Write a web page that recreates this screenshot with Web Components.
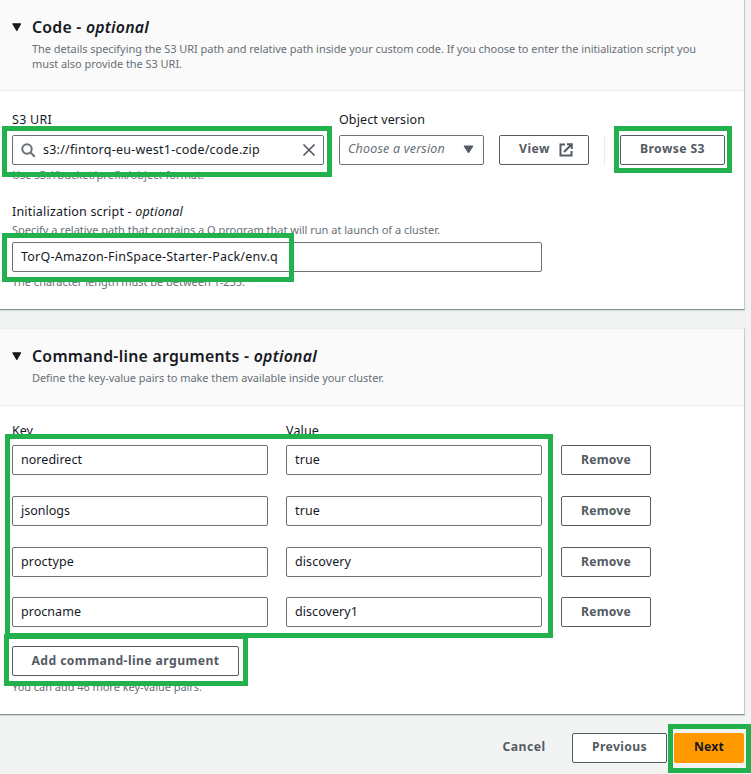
<!DOCTYPE html>
<html lang="en">
<head>
<meta charset="utf-8">
<title>Create cluster</title>
<style>
html, body { margin: 0; height: 774px; overflow: hidden; background: #f2f3f3; }
body { font: 13px/20px "Noto Sans", "Open Sans", sans-serif; color: #16191f; position: relative; }
</style>
</head>
<body>
<cluster-page></cluster-page>
<script>
// Single-line text whose tracking is tuned so that it spans the given width.
class FitText extends HTMLElement {
  connectedCallback() {
    if (this.shadowRoot) return;
    this.attachShadow({ mode: 'open' }).innerHTML =
      '<style>:host{display:block;white-space:nowrap}span{display:inline-block}</style><span><slot></slot></span>';
    requestAnimationFrame(() => this.fit());
    this.fit();
  }
  fit() {
    const want = parseFloat(this.getAttribute('w'));
    const span = this.shadowRoot.querySelector('span');
    const count = this.textContent.length;
    if (!want || !count) return;
    span.style.letterSpacing = '0px';
    const have = span.getBoundingClientRect().width;
    if (have) span.style.letterSpacing = ((want - have) / count).toFixed(4) + 'px';
  }
}

class UiPanel extends HTMLElement {
  constructor() {
    super();
    this.attachShadow({ mode: 'open' }).innerHTML = `
<style>
:host { display: flex; flex-direction: column; box-sizing: border-box; width: 745px; background: #fff;
  border-right: 1px solid #c6cccf; border-bottom: 1px solid #879596; box-shadow: 0 1px 1px #d5dbdb; }
header { display: flex; box-sizing: border-box; flex: none; height: var(--head); padding: var(--head-pad) 0 0 12px;
  gap: 10px; background: #fafafa; border-bottom: 1px solid #eaeded; }
svg { display: block; margin-top: 7px; flex: none; }
.title { font-size: 15.8px; line-height: 22px; font-weight: 600; }
.desc { font-size: 11px; line-height: 15px; color: #687078; padding-top: 3px; }
.body { padding-left: 12px; }
</style>
<header><svg width="10" height="9"><path d="M.7.8h8.1L4.8 7.8z" fill="#16191f" stroke="#16191f" stroke-linejoin="round"/></svg>
<div><div class="title"><slot name="title"></slot></div><div class="desc"><slot name="desc"></slot></div></div></header>
<div class="body"><slot></slot></div>`;
  }
}

class UiInput extends HTMLElement {
  constructor() {
    super();
    this.attachShadow({ mode: 'open' }).innerHTML = `
<style>
:host { display: flex; align-items: center; box-sizing: border-box; height: 30px; padding: 0 8px; border: 1px solid #687078;
  border-radius: 2px; background: #fff; font-size: 12.5px; line-height: 28px; }
</style><slot></slot>`;
  }
}

class UiButton extends HTMLElement {
  constructor() {
    super();
    this.attachShadow({ mode: 'open' }).innerHTML = `
<style>
:host { display: flex; align-items: center; justify-content: center; gap: 9px; box-sizing: border-box; height: 30px; flex: none;
  border: 1px solid #545b64; border-radius: 2px; background: #fff; color: #545b64; font-weight: 700; font-size: 12.2px; line-height: 26px; padding-bottom: 2px; }
:host([variant=primary]) { background: #f90; border-color: #f90; color: #16191f; }
:host([variant=link]) { background: none; border-color: transparent; }
</style><slot></slot>`;
  }
}

class MarkBox extends HTMLElement {
  connectedCallback() {
    const [x, y, r, b] = this.getAttribute('box').split(' ').map(Number);
    this.attachShadow({ mode: 'open' }).innerHTML = `
<style>:host { position: absolute; z-index: 2; box-sizing: border-box; border: 5px solid #22b14c;
  left: ${x}px; top: ${y}px; width: ${r - x}px; height: ${b - y}px; }</style>`;
  }
}

class ArgRow extends HTMLElement {
  connectedCallback() {
    const [k, kw, v, vw] = this.getAttribute('data').split(' ');
    this.attachShadow({ mode: 'open' }).innerHTML = `
<style>:host { display: grid; grid-template-columns: 256px 256px 90px; column-gap: 18px; }
ui-button { margin-left: 1px; width: 90px; line-height: 28px; padding-bottom: 0; }</style>
<ui-input><fit-text w="${kw}">${k}</fit-text></ui-input>
<ui-input><fit-text w="${vw}">${v}</fit-text></ui-input>
<ui-button><fit-text w="50">Remove</fit-text></ui-button>`;
  }
}

class ClusterPage extends HTMLElement {
  constructor() {
    super();
    this.attachShadow({ mode: 'open' }).innerHTML = `
<style>
:host { display: flex; flex-direction: column; height: 774px; }
.code { --head: 91px; --head-pad: 16px; height: 310px; }
.args { --head: 77px; --head-pad: 16px; height: 387px; margin-top: 18px; border-top: 1px solid #eaeded; }
.row { display: flex; }
.label { font-size: 12.5px; line-height: 18px; }
.hint { font-size: 11px; line-height: 16px; color: #687078; }
.s3 { padding-top: 20px; }
.search svg { flex: none; }
.search fit-text { flex: 1; margin-left: 7px; }
.ver { margin-left: 15px; width: 145px; }
.ver ui-input { color: #687078; font-style: italic; justify-content: space-between; padding: 0 9px 2px 8px; line-height: 26px; }
.divider { width: 1px; height: 30px; margin: 0 15px 0 15px; background: #eaeded; }
.s3 > ui-button, .s3 > .divider { margin-top: 24px; }
.box { margin-top: 6px; }
.heads { display: grid; grid-template-columns: 274px 1fr; padding-top: 16px; height: 23px; }
arg-row + arg-row { margin-top: 21px; }
arg-row.last { margin-top: 20px; }
.foot { display: flex; justify-content: flex-end; padding: 18px 7px 0 0; }
</style>
<ui-panel class="code">
  <fit-text slot="title" w="117">Code - <i>optional</i></fit-text>
  <fit-text slot="desc" w="664">The details specifying the S3 URI path and relative path inside your custom code. If you choose to enter the initialization script you</fit-text>
  <fit-text slot="desc" w="150">must also provide the S3 URI.</fit-text>
  <div class="row s3">
    <div style="width:312px">
      <fit-text class="label" w="40">S3 URI</fit-text>
      <ui-input class="box search">
        <svg width="15" height="15" fill="none" stroke="#687078" stroke-width="2"><circle cx="6" cy="6" r="4.7"/><path d="M9.5 9.5l4.3 4.3"/></svg>
        <fit-text w="217">s3://fintorq-eu-west1-code/code.zip</fit-text>
        <svg width="14" height="14" fill="none" stroke="#545b64" stroke-width="1.7" style="margin-right:-1px"><path d="M1.5 1.5l11 11M12.5 1.5l-11 11"/></svg>
      </ui-input>
      <fit-text class="hint" w="192" style="margin-top:2px">Use s3://bucket/prefix/object format.</fit-text>
    </div>
    <div class="ver">
      <fit-text class="label" w="86">Object version</fit-text>
      <ui-input class="box"><fit-text w="97">Choose a version</fit-text><svg width="11" height="9"><path d="M1 1h9L5.5 8z" fill="#545b64" stroke="#545b64" stroke-linejoin="round"/></svg></ui-input>
    </div>
    <ui-button style="width:90px;margin-left:15px;padding-left:4px"><fit-text w="31">View</fit-text><svg width="14" height="14" fill="none" stroke="#545b64" stroke-width="2" style="margin-top:2px"><path d="M6 1.5H1.5v11h11V8M8 1.2h4.8V6M12.5 1.5L5 9"/></svg></ui-button>
    <div class="divider"></div>
    <ui-button style="width:105px"><fit-text w="65">Browse S3</fit-text></ui-button>
  </div>
  <fit-text class="label" w="171" style="margin-top:20px">Initialization script - <i>optional</i></fit-text>
  <fit-text class="hint" w="428" style="margin-top:1px">Specify a relative path that contains a Q program that will run at launch of a cluster.</fit-text>
  <ui-input style="width:530px;margin-top:4px"><fit-text w="257">TorQ-Amazon-FinSpace-Starter-Pack/env.q</fit-text></ui-input>
  <fit-text class="hint" w="233" style="margin-top:2px">The character length must be between 1-255.</fit-text>
</ui-panel>
<ui-panel class="args">
  <fit-text slot="title" w="285">Command-line arguments - <i>optional</i></fit-text>
  <fit-text slot="desc" w="352">Define the key-value pairs to make them available inside your cluster.</fit-text>
  <div class="heads label"><fit-text w="21">Key</fit-text><fit-text w="33">Value</fit-text></div>
  <arg-row data="noredirect 61 true 25"></arg-row>
  <arg-row data="jsonlogs 49 true 25"></arg-row>
  <arg-row data="proctype 53 discovery 56"></arg-row>
  <arg-row class="last" data="procname 60 discovery1 63"></arg-row>
  <ui-button style="width:227px;margin-top:19px;line-height:28px;padding-bottom:0"><fit-text w="188">Add command-line argument</fit-text></ui-button>
  <fit-text class="hint" w="190" style="margin-top:3px">You can add 46 more key-value pairs.</fit-text>
</ui-panel>
<div class="foot">
  <ui-button variant="link" style="width:84px;margin-right:6px"><fit-text w="43">Cancel</fit-text></ui-button>
  <ui-button style="width:95px"><fit-text w="55">Previous</fit-text></ui-button>
  <ui-button variant="primary" style="width:70px;margin-left:7px"><fit-text w="30">Next</fit-text></ui-button>
</div>
<mark-box box="2 126 332 177"></mark-box>
<mark-box box="614 126 732 173"></mark-box>
<mark-box box="2 233 294 282"></mark-box>
<mark-box box="5 434 553 638"></mark-box>
<mark-box box="4 634 248 686"></mark-box>
<mark-box box="668 724 751 773"></mark-box>`;
  }
}
customElements.define('ui-panel', UiPanel);
customElements.define('ui-input', UiInput);
customElements.define('ui-button', UiButton);
customElements.define('mark-box', MarkBox);
customElements.define('arg-row', ArgRow);
customElements.define('cluster-page', ClusterPage);
customElements.define('fit-text', FitText);
</script>
</body>
</html>
